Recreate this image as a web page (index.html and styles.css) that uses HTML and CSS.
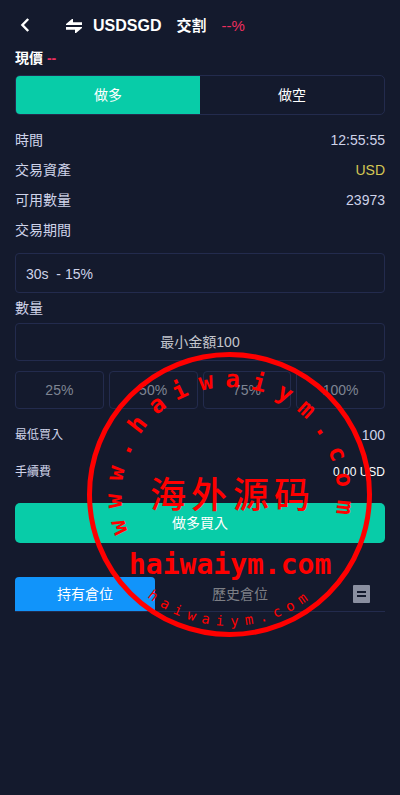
FILE: index.html
```
<!DOCTYPE html>
<html lang="zh-Hant">
<head>
    <meta charset="UTF-8">
    <meta name="viewport" content="width=device-width, initial-scale=1.0">
    <title>USDSGD 交割</title>
    <link rel="stylesheet" href="styles.css">
</head>
<body>

    <header class="header">
        <button class="icon-btn back-btn" type="button" aria-label="返回">
            <svg width="10" height="14" viewBox="0 0 10 14"><path d="M8.2 1L2.4 7l5.8 6" fill="none" stroke="currentColor" stroke-width="2.4"/></svg>
        </button>
        <button class="icon-btn swap-btn" type="button" aria-label="切換">
            <svg width="16" height="14" viewBox="0 0 16 14"><path d="M0 6V5L6 0h1v3.2h9V6zM16 8v1l-6 5H9v-3.2H0V8z" fill="currentColor"/></svg>
        </button>
        <h1 class="pair">USDSGD</h1>
        <span class="type">交割</span>
        <span class="change">--%</span>
    </header>

    <main class="content">
        <p class="price">現價 <span class="down">--</span></p>

        <div class="side">
            <button class="side-btn active" type="button">做多</button>
            <button class="side-btn" type="button">做空</button>
        </div>

        <div class="row"><span>時間</span><span>12:55:55</span></div>
        <div class="row"><span>交易資產</span><span class="asset">USD</span></div>
        <div class="row"><span>可用數量</span><span>23973</span></div>
        <label class="row" for="period">交易期間</label>
        <select class="field period" id="period">
            <option>30s&nbsp; - 15%</option>
        </select>

        <label class="row" for="amount">數量</label>
        <input class="field amount" id="amount" type="text" placeholder="最小金額100">

        <div class="percents">
            <button class="percent" type="button">25%</button>
            <button class="percent" type="button">50%</button>
            <button class="percent" type="button">75%</button>
            <button class="percent" type="button">100%</button>
        </div>

        <div class="row info"><span class="small">最低買入</span><span>100</span></div>
        <div class="row info"><span class="small">手續費</span><span class="small fee">0.00 USD</span></div>

        <button class="buy-btn" type="button">做多買入</button>

        <div class="tabs">
            <button class="tab active" type="button">持有倉位</button>
            <button class="tab" type="button">歷史倉位</button>
            <button class="icon-btn list-btn" type="button" aria-label="全部">
                <svg width="17" height="18" viewBox="0 0 17 18"><rect width="17" height="18" rx="1" fill="currentColor"/><path d="M4 7h9M4 11h9" stroke="#141a2d" stroke-width="2"/></svg>
            </button>
        </div>
    </main>

    <!-- round stamp over the page -->
    <svg class="stamp" viewBox="0 0 285 285">
        <defs>
            <path id="arc-top" d="M41 180A108 108 0 1 1 244 180"/>
            <path id="arc-bottom" d="M60 245A132 132 0 0 0 225 245"/>
        </defs>
        <circle cx="142.5" cy="142.5" r="140" fill="none" stroke="currentColor" stroke-width="5"/>
        <text class="stamp-top"><textPath href="#arc-top"><tspan x="0 25 51 76 101 127 152 178 203 228 254 279 304 330 355 381">www.haiwaiym.com</tspan></textPath></text>
        <text class="stamp-name" x="63 104 146 187" y="156">海外源码</text>
        <text class="stamp-site" x="42" y="222">haiwaiym.com</text>
        <text class="stamp-bottom"><textPath href="#arc-bottom"><tspan x="0 15 30 45 60 75 90 105 120 135 150 165">haiwaiym.com</tspan></textPath></text>
    </svg>

</body>
</html>
```
FILE: styles.css
```
* {
    box-sizing: border-box;
}
body {
    position: relative;
    margin: 0;
    min-height: 100vh;
    background-color: #141a2d;
    color: #cfd3e9;
    font-family: "Liberation Sans", "Noto Sans CJK TC", sans-serif;
    font-size: 14px;
    line-height: 20px;
}
button, input, select {
    font: inherit;
    color: inherit;
    margin: 0;
    padding: 0;
    border: none;
    background: none;
}
button {
    cursor: pointer;
}
.icon-btn {
    display: flex;
}
.header {
    display: flex;
    align-items: center;
    height: 50px;
    padding: 2px 20px 0;
    color: #fff;
    font-size: 15px;
}
.back-btn {
    margin-bottom: 2px;
}
.swap-btn {
    margin-left: 36px;
}
.pair {
    margin: 0 15px 0 11px;
    font-size: 16px;
}
.type {
    font-weight: bold;
}
.change {
    margin-left: 15px;
}
.change, .down {
    color: #ee2f5f;
}
.content {
    padding: 0 15px;
}
.price {
    margin: 0;
    padding-bottom: 8px;
    line-height: 17px;
    color: #fff;
    font-weight: bold;
}
.side {
    display: flex;
    height: 40px;
    margin-bottom: 10px;
    border: 1px solid #232b4d;
    border-radius: 5px;
    overflow: hidden;
}
.side-btn {
    flex: 1;
    color: #fff;
}
.side-btn.active {
    background: #08cca8;
}
.row {
    display: flex;
    justify-content: space-between;
    align-items: center;
    height: 30px;
}
.asset {
    color: #d5c754;
}
.field {
    display: block;
    width: 100%;
    height: 38px;
    border: 1px solid #232b4d;
    border-radius: 4px;
}
.period {
    appearance: none;
    height: 40px;
    margin-top: 8px;
    padding: 2px 10px 0;
}
.amount {
    text-align: center;
}
.amount::placeholder {
    color: #c3c5cc;
}
.percents {
    display: flex;
    gap: 5px;
    margin: 10px 0 7px;
}
.percent {
    flex: 1;
    height: 38px;
    border: 1px solid #232b4d;
    border-radius: 4px;
    color: #7f8593;
}
.info {
    height: 37px;
}
.small {
    font-size: 12px;
}
.fee {
    color: #fff;
}
.buy-btn {
    width: 100%;
    height: 40px;
    margin: 13px 0 34px;
    border-radius: 5px;
    background: #08cca8;
    color: #fff;
}
.tabs {
    display: flex;
    align-items: center;
    border-bottom: 1px solid #232b4d;
}
.tab {
    width: 140px;
    height: 34px;
    color: #7d7f85;
}
.tab:nth-child(2) {
    margin-left: 15px;
}
.tab.active {
    border-radius: 4px 4px 0 0;
    background: #1194fa;
    color: #fff;
}
.list-btn {
    margin: 0 15px 0 auto;
    color: #8a8fa0;
}
.stamp {
    position: absolute;
    top: 352px;
    left: 87px;
    width: 285px;
    height: 285px;
    color: #f00;
    fill: #f00;
    font-family: "DejaVu Sans Mono", monospace;
    pointer-events: none;
}
.stamp-top {
    font-size: 24px;
    font-weight: bold;
}
.stamp-name {
    font-family: "Noto Sans CJK SC", sans-serif;
    font-size: 36px;
    font-weight: 500;
}
.stamp-site {
    font-size: 28px;
    font-weight: bold;
}
.stamp-bottom {
    font-size: 14px;
}
```
